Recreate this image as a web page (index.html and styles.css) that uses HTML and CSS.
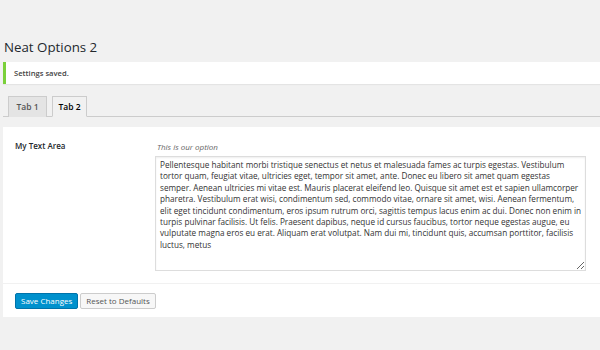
FILE: index.html
```html
<!DOCTYPE html>
<html>
    <head>
        <meta charset="UTF-8">
        <link rel="stylesheet" href="styles.css">
    </head>
    <body>
        <div class="wrap">
            <h2 class="page-title">Neat Options 2</h2>

            <div class="notice">
                <p>Settings saved.</p>
            </div>

            <div class="tabs">
                <a class="tab">Tab 1</a>
                <a class="tab active">Tab 2</a>
            </div>

            <form class="panel">
                <div class="field">
                    <label class="field-label">My Text Area</label>
                    <div class="field-body">
                        <p class="desc">This is our option</p>
                        <textarea class="text-area" spellcheck="false">Pellentesque habitant morbi tristique senectus et netus et malesuada fames ac turpis egestas. Vestibulum tortor quam, feugiat vitae, ultricies eget, tempor sit amet, ante. Donec eu libero sit amet quam egestas semper. Aenean ultricies mi vitae est. Mauris placerat eleifend leo. Quisque sit amet est et sapien ullamcorper pharetra. Vestibulum erat wisi, condimentum sed, commodo vitae, ornare sit amet, wisi. Aenean fermentum, elit eget tincidunt condimentum, eros ipsum rutrum orci, sagittis tempus lacus enim ac dui. Donec non enim in turpis pulvinar facilisis. Ut felis. Praesent dapibus, neque id cursus faucibus, tortor neque egestas augue, eu vulputate magna eros eu erat. Aliquam erat volutpat. Nam dui mi, tincidunt quis, accumsan porttitor, facilisis luctus, metus</textarea>
                    </div>
                </div>

                <div class="actions">
                    <button type="button" class="btn btn-primary">Save Changes</button>
                    <button type="button" class="btn">Reset to Defaults</button>
                </div>
            </form>
        </div>
    </body>
</html>
```

FILE: styles.css
```css
* {
    box-sizing: border-box;
}

body {
    margin: 0;
    background: #f1f1f1;
    color: #444;
    font-family: "Open Sans", "Liberation Sans", sans-serif;
}

.wrap {
    padding: 38px 0 0 3px;
}

/* Page heading */
.page-title {
    margin: 0 0 5px 1px;
    font-size: 13.3px;
    font-weight: 400;
    line-height: 19px;
    color: #23282d;
}

/* "Settings saved" box */
.notice {
    background: #fff;
    border-left: 3px solid #7ad03a;
    box-shadow: 0 1px 1px rgba(0, 0, 0, 0.05);
    height: 22px;
    padding: 0 0 0 8px;
    display: flex;
    align-items: center;
}

.notice p {
    margin: 0;
    font-size: 7.6px;
    font-weight: 600;
    color: #444;
}

/* Tabs */
.tabs {
    display: flex;
    gap: 5px;
    margin-top: 12px;
    padding-left: 5px;
    border-bottom: 1px solid #ccc;
}

.tab {
    display: block;
    width: 39px;
    height: 21px;
    margin-bottom: -1px;
    border: 1px solid #ccc;
    border-bottom: none;
    background: #e4e4e4;
    color: #555;
    font-size: 8.5px;
    font-weight: 600;
    line-height: 20px;
    text-align: center;
}

.tab.active {
    width: 35px;
    background: #f1f1f1;
    color: #000;
    border-bottom: 1px solid #f1f1f1;
}

/* Options panel */
.panel {
    margin-top: 10px;
    background: #fff;
}

.field {
    display: flex;
    padding: 13px 0 12px 12px;
    border-bottom: 1px solid #f1f1f1;
}

.field-label {
    width: 140px;
    flex: none;
    font-size: 8px;
    font-weight: 600;
    color: #23282d;
}

.desc {
    margin: 1px 0 4px 2px;
    font-size: 8px;
    font-style: italic;
    color: #666;
}

.text-area {
    display: block;
    width: 431px;
    height: 115px;
    padding: 2px 2px 2px 4px;
    border: 1px solid #ddd;
    box-shadow: inset 0 1px 2px rgba(0, 0, 0, 0.07);
    font-family: inherit;
    font-size: 8.2px;
    line-height: 11.4px;
    color: #333;
    overflow: hidden;
}

.actions {
    display: flex;
    gap: 2px;
    padding: 9px 0 8px 12px;
}

.btn {
    height: 16px;
    padding: 0 5px;
    border: 1px solid #ccc;
    border-radius: 2px;
    background: #f7f7f7;
    color: #555;
    font-family: inherit;
    font-size: 8px;
    line-height: 14px;
}

.btn-primary {
    background: #0091cd;
    border-color: #0073aa;
    color: #fff;
}
```
